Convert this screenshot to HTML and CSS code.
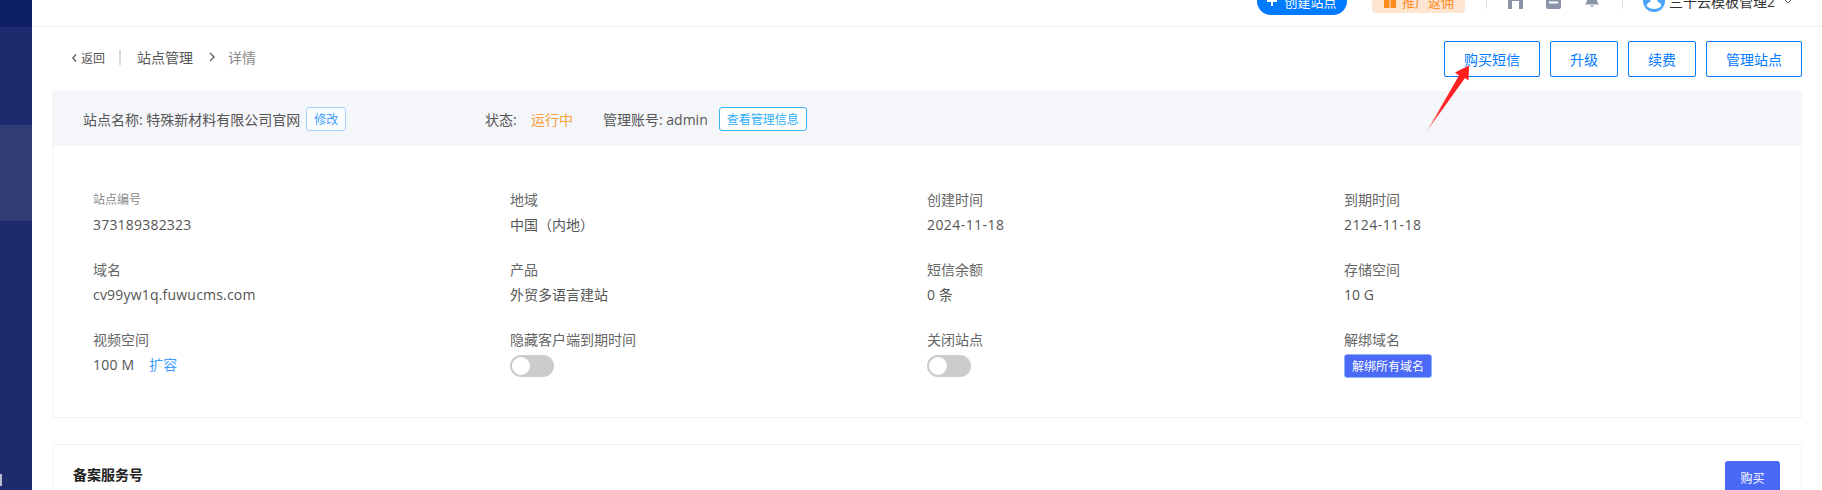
FILE: index.html
```html
<!DOCTYPE html>
<html lang="zh-CN">
<head>
<meta charset="utf-8">
<title>站点详情</title>
<link rel="stylesheet" href="styles.css">
</head>
<body>
<div class="app">
  <aside class="sidebar">
    <div class="side-top"></div>
    <div class="side-mid"></div>
    <div class="side-active"></div>
    <div class="side-rest"></div>
    <span class="side-glyph"></span>
  </aside>
  <div class="main">
    <header class="topbar">
      <a class="create-btn"><svg class="plus" viewBox="0 0 10 10"><path d="M5 0v10M0 5h10"/></svg>创建站点</a>
      <a class="promo"><svg class="gift" viewBox="0 0 14 14"><path d="M0 0h14v4.500H0zM1 6h5.500v8H1zM7.500 6H13v8H7.500z"/></svg>推广返佣</a>
      <span class="vline vline-a"></span>
      <svg class="tool tool-home" viewBox="0 0 15 18"><path fill-rule="evenodd" d="M7.500 0 15 6v12H11V10H4v8H0V6z"/></svg>
      <svg class="tool tool-doc" viewBox="0 0 15 18"><path fill-rule="evenodd" d="M2 0h11a2 2 0 0 1 2 2v14a2 2 0 0 1-2 2H2a2 2 0 0 1-2-2V2a2 2 0 0 1 2-2zM3 10.500v2h9v-2z"/></svg>
      <svg class="tool tool-bell" viewBox="0 0 14 18"><path d="M7 0a5 5 0 0 1 5 5v6l2 3.500H0L2 11V5a5 5 0 0 1 5-5zM5 15.500h4L7 17.500z"/></svg>
      <span class="vline vline-b"></span>
      <svg class="avatar" viewBox="0 0 22 22"><circle cx="11" cy="11" r="11" fill="#4aa3fb"/><circle cx="11" cy="8" r="4.500" fill="#fff"/><path d="M3.500 16c.5-3 3.500-5 7.500-5s7 2 7.500 5c-2 2-4.500 3-7.500 3s-5.500-1-7.500-3z" fill="#fff"/></svg>
      <span class="user-name">三十云模板管理2</span>
      <svg class="caret" viewBox="0 0 10 6"><path d="M.5.500 5 5 9.500.500"/></svg>
    </header>

    <div class="content">
      <div class="page-head">
        <nav class="crumbs">
          <a class="back"><svg class="back-arrow" viewBox="0 0 5 8"><path d="M4 .5.8 4 4 7.500"/></svg>返回</a>
          <span class="crumb-sep"></span>
          <span class="crumb">站点管理</span>
          <svg class="crumb-arrow" viewBox="0 0 6 10"><path d="M1 1l4 4-4 4"/></svg>
          <span class="crumb-current">详情</span>
        </nav>
        <div class="actions">
          <a class="action">购买短信</a>
          <a class="action">升级</a>
          <a class="action">续费</a>
          <a class="action">管理站点</a>
        </div>
      </div>

      <section class="card detail">
        <div class="summary">
          <div class="sum-name"><span>站点名称: 特殊新材料有限公司官网</span><a class="tag tag-edit">修改</a></div>
          <span class="sum-label">状态:</span>
          <span class="sum-status">运行中</span>
          <span class="sum-account">管理账号: admin</span>
          <a class="tag tag-info">查看管理信息</a>
        </div>
        <div class="info-grid">
          <div class="info"><div class="label label-small">站点编号</div><div class="value value-num">373189382323</div></div>
          <div class="info"><div class="label">地域</div><div class="value">中国（内地）</div></div>
          <div class="info"><div class="label">创建时间</div><div class="value value-date">2024-11-18</div></div>
          <div class="info"><div class="label">到期时间</div><div class="value value-date">2124-11-18</div></div>
          <div class="info"><div class="label">域名</div><div class="value value-num">cv99yw1q.fuwucms.com</div></div>
          <div class="info"><div class="label">产品</div><div class="value">外贸多语言建站</div></div>
          <div class="info"><div class="label">短信余额</div><div class="value">0 条</div></div>
          <div class="info"><div class="label">存储空间</div><div class="value">10 G</div></div>
          <div class="info"><div class="label">视频空间</div><div class="value"><span class="value-num">100 M</span><a class="expand">扩容</a></div></div>
          <div class="info"><div class="label">隐藏客户端到期时间</div><span class="switch"><span class="knob"></span></span></div>
          <div class="info"><div class="label">关闭站点</div><span class="switch"><span class="knob"></span></span></div>
          <div class="info"><div class="label">解绑域名</div><a class="unbind">解绑所有域名</a></div>
        </div>
      </section>

      <section class="card service">
        <h3 class="service-title">备案服务号</h3>
        <a class="buy">购买</a>
      </section>
    </div>
  </div>
</div>
<svg class="annotation" viewBox="0 0 50 70">
  <defs><linearGradient id="arrowFade" x1="0" y1="1" x2="1" y2="0"><stop offset="0" stop-color="#ff8a8a"/><stop offset=".35" stop-color="#ff2a2a"/><stop offset="1" stop-color="#ff1a1a"/></linearGradient></defs>
  <path fill="url(#arrowFade)" d="M1 68 33 12.500 29 9.500 43 2.500 42.500 17.500 39 15z"/>
</svg>
</body>
</html>
```
FILE: styles.css
```css
* { box-sizing: border-box; }
html, body { margin: 0; padding: 0; width: 1822px; height: 490px; overflow: hidden; background: #fff; }
body { position: relative; font-family: "Open Sans", "Noto Sans CJK SC", sans-serif; font-size: 14px; color: #555; }
a { text-decoration: none; }

.app { display: flex; width: 1822px; height: 490px; }

.sidebar { position: relative; flex: 0 0 32px; display: flex; flex-direction: column; background: #1d2a6e; }
.side-top { height: 27px; background: #0f1f66; }
.side-mid { height: 98px; background: #1d2a6e; }
.side-active { height: 96px; background: #323d76; }
.side-rest { flex: 1; }
.side-glyph { position: absolute; left: 0; top: 474px; width: 2px; height: 12px; background: #b9bdd0; }

.main { flex: 1; min-width: 0; display: flex; flex-direction: column; }

.topbar { flex: 0 0 27px; height: 27px; display: flex; align-items: flex-end; justify-content: flex-end; padding-right: 29px; border-bottom: 1px solid #eeeeee; }
.create-btn { display: flex; align-items: center; justify-content: center; width: 90px; height: 28px; margin-bottom: 11px; border-radius: 14px; background: #007aff; color: #fff; font-size: 13px; }
.plus { width: 10px; height: 10px; margin-right: 7px; }
.plus path { stroke: #fff; stroke-width: 2; fill: none; }
.promo { display: flex; align-items: center; justify-content: center; width: 93px; height: 24px; margin: 0 0 13px 25px; border-radius: 4px; background: #fde5d2; color: #ff8a1e; font-size: 13px; }
.gift { width: 14px; height: 14px; margin-right: 5px; fill: #ff8a1e; }
.vline { width: 1px; height: 20px; margin-bottom: 17px; background: #dddddd; }
.vline-a { margin-left: 21px; }
.vline-b { margin-left: 23px; }
.tool { height: 18px; fill: #8b93a8; margin-bottom: 17px; }
.tool-home { width: 15px; margin-left: 21px; }
.tool-doc { width: 15px; margin-left: 23px; }
.tool-bell { width: 14px; margin-left: 24px; margin-bottom: 18px; }
.avatar { width: 22px; height: 22px; margin: 0 0 14px 20px; }
.user-name { margin: 0 0 14px 4px; line-height: 20px; color: #333; }
.caret { width: 10px; height: 6px; margin: 0 0 22px 8px; }
.caret path { fill: none; stroke: #555; stroke-width: 1; }

.content { flex: 1; padding: 0 20px; }
.page-head { display: flex; justify-content: space-between; align-items: flex-start; height: 64px; padding-top: 14px; }

.crumbs { display: flex; align-items: center; height: 32px; padding-left: 20px; }
.back { display: flex; align-items: center; font-size: 12px; color: #555; padding-top: 2px; }
.back-arrow { width: 5px; height: 8px; margin-right: 4px; }
.back-arrow path, .crumb-arrow path { fill: none; stroke: #555; stroke-width: 1.2; }
.crumb-sep { width: 2px; height: 15px; margin: 0 16px 0 14px; background: #d8d8d8; }
.crumb { color: #555; }
.crumb-arrow { width: 6px; height: 10px; margin: 0 13px 0 16px; }
.crumb-current { color: #888; }

.actions { display: flex; gap: 10px; }
.action { display: flex; align-items: center; justify-content: center; height: 36px; padding: 0 19px; border: 1px solid #007aff; border-radius: 2px; color: #007aff; background: #fff; }

.card { border: 1px solid #f3f3f3; background: #fff; }
.detail { height: 327px; border-top: 0; }

.summary { display: flex; align-items: center; height: 55px; margin: 0 -1px; padding-left: 31px; background: #f5f6fa; }
.sum-name { display: flex; align-items: center; width: 402px; }
.sum-label { width: 46px; }
.sum-status { width: 72px; color: #f7a23b; }
.sum-account { margin-right: 11px; }
.tag { display: flex; align-items: center; justify-content: center; height: 24px; border-radius: 3px; font-size: 12px; }
.tag-edit { width: 40px; margin-left: 6px; border: 1px solid #a6d0fb; color: #409eff; background: #fafcff; }
.tag-info { width: 88px; border: 1px solid #35b2f5; color: #30aef5; background: #fff; }

.info-grid { display: grid; grid-template-columns: repeat(4, 1fr); grid-auto-rows: 70px; padding: 44px 40px 0; }
.info { min-width: 0; }
.label { line-height: 20px; color: #666; }
.label-small { font-size: 12px; color: #888; }
.value { line-height: 30px; color: #555; }
.value-num { letter-spacing: .2px; }
.value-date { letter-spacing: .43px; }
.expand { margin-left: 15px; color: #409eff; }
.switch { display: flex; align-items: center; width: 44px; height: 22px; margin-top: 5px; padding: 2px; border-radius: 11px; background: #cccccc; }
.knob { display: block; width: 18px; height: 18px; border-radius: 50%; background: #fff; }
.unbind { display: inline-flex; align-items: center; justify-content: center; width: 88px; height: 24px; margin-top: 4px; border: 1px solid #8fb0fb; border-radius: 3px; background: #4a69f6; color: #fff; font-size: 12px; }

.service { display: flex; justify-content: space-between; align-items: flex-start; margin-top: 26px; padding: 16px 21px 0 20px; height: 120px; }
.service-title { margin: 0; line-height: 28px; font-size: 14px; font-weight: 700; color: #222; }
.buy { display: flex; align-items: center; justify-content: center; width: 55px; height: 34px; border-radius: 3px; background: #4a69f6; color: #fff; font-size: 12px; }

.annotation { position: absolute; left: 1426px; top: 63px; width: 50px; height: 70px; }
```
